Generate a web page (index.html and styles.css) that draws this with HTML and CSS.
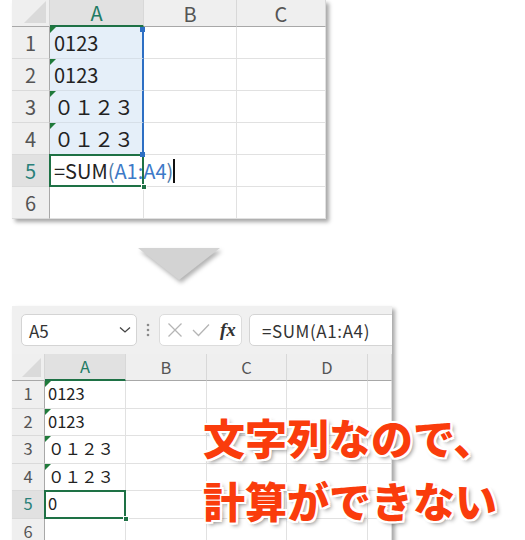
FILE: index.html
```html
<!DOCTYPE html>
<html lang="ja">
<head>
<meta charset="utf-8">
<title>文字列の合計</title>
<link rel="stylesheet" href="styles.css">
</head>
<body>
<div class="page">

  <!-- editing the formula -->
  <div class="shot shot-top">
    <div class="grid grid-top">
      <div class="corner"><span class="tri"></span></div>
      <div class="ch ch-sel">A</div>
      <div class="ch">B</div>
      <div class="ch">C</div>

      <div class="rh">1</div>
      <div class="c rng txt"><span class="h h-tr"></span>0123</div>
      <div class="c"></div><div class="c"></div>

      <div class="rh">2</div>
      <div class="c rng txt">0123</div>
      <div class="c"></div><div class="c"></div>

      <div class="rh">3</div>
      <div class="c rng txt">０１２３</div>
      <div class="c"></div><div class="c"></div>

      <div class="rh">4</div>
      <div class="c rng txt"><span class="h h-br"></span>０１２３</div>
      <div class="c"></div><div class="c"></div>

      <div class="rh rh-sel">5</div>
      <div class="c active"><span>=SUM</span><span class="paren">(</span><span class="ref">A1:A4</span><span class="paren">)</span><span class="caret"></span><span class="h-g"></span></div>
      <div class="c"></div><div class="c"></div>

      <div class="rh">6</div>
      <div class="c"></div><div class="c"></div><div class="c"></div>
    </div>
  </div>

  <svg class="arrow" width="86" height="38" viewBox="0 0 86 38">
    <polygon points="0,0 82,0 41,32" fill="#d3d3d3"/>
  </svg>

  <!-- after entering the formula -->
  <div class="shot shot-bottom">
    <div class="fbar">
      <div class="namebox">
        <span>A5</span>
        <svg class="chev" width="12" height="8" viewBox="0 0 12 8"><polyline points="1,1.5 6,6 11,1.5" fill="none" stroke="#444" stroke-width="1.3"/></svg>
      </div>
      <svg class="dots" width="4" height="14" viewBox="0 0 4 14"><circle cx="2" cy="2" r="1.3" fill="#8a8a8a"/><circle cx="2" cy="7" r="1.3" fill="#8a8a8a"/><circle cx="2" cy="12" r="1.3" fill="#8a8a8a"/></svg>
      <div class="fxbox">
        <svg width="16" height="16" viewBox="0 0 16 16"><path d="M1.5 1.5 L14.5 14.5 M14.5 1.5 L1.5 14.5" stroke="#b5b5b5" stroke-width="1.3" fill="none"/></svg>
        <svg width="18" height="14" viewBox="0 0 18 14"><polyline points="1,7 6.5,12.5 17,1.5" stroke="#b5b5b5" stroke-width="1.3" fill="none"/></svg>
        <span class="fx">fx</span>
      </div>
      <div class="formula">=SUM(A1:A4)</div>
    </div>
    <div class="grid grid-bottom">
      <div class="corner"><span class="tri"></span></div>
      <div class="ch ch-sel">A</div>
      <div class="ch">B</div>
      <div class="ch">C</div>
      <div class="ch">D</div>
      <div class="ch"></div>

      <div class="rh">1</div>
      <div class="c txt">0123</div>
      <div class="c"></div><div class="c"></div><div class="c"></div><div class="c"></div>

      <div class="rh">2</div>
      <div class="c txt">0123</div>
      <div class="c"></div><div class="c"></div><div class="c"></div><div class="c"></div>

      <div class="rh">3</div>
      <div class="c txt">０１２３</div>
      <div class="c"></div><div class="c"></div><div class="c"></div><div class="c"></div>

      <div class="rh">4</div>
      <div class="c txt">０１２３</div>
      <div class="c"></div><div class="c"></div><div class="c"></div><div class="c"></div>

      <div class="rh rh-sel">5</div>
      <div class="c active">0<span class="h-g"></span></div>
      <div class="c"></div><div class="c"></div><div class="c"></div><div class="c"></div>

      <div class="rh">6</div>
      <div class="c"></div><div class="c"></div><div class="c"></div><div class="c"></div><div class="c"></div>
    </div>
  </div>

  <div class="note">文字列なので、<br>計算ができない</div>
</div>
</body>
</html>
```

FILE: styles.css
```css
html, body {
  margin: 0;
  padding: 0;
  background: #fff;
}

.page {
  position: relative;
  width: 525px;
  height: 540px;
  overflow: hidden;
  padding-left: 12px;
  box-sizing: border-box;
  font-family: "Noto Sans CJK JP", "Noto Sans", sans-serif;
  color: #222;
}

.shot {
  position: relative;
  background: #fff;
  overflow: hidden;
  box-shadow: 3px 3px 4px rgba(0, 0, 0, 0.35);
}

.shot-top {
  width: 314px;
  height: 219px;
}

.shot-bottom {
  margin-top: 20px;
  width: 380px;
  height: 240px;
}

/* ---------- grid ---------- */
.grid {
  display: grid;
}

.grid-top {
  grid-template-columns: 38px 94px 93px 89px;
  grid-template-rows: 27px repeat(6, 32px);
  font-size: 20px;
}

.grid-bottom {
  grid-template-columns: 33px 81px 81px 80px 81px 24px;
  grid-template-rows: 27px repeat(6, 27.5px);
  font-size: 16.5px;
}

.grid > div {
  box-sizing: border-box;
  position: relative;
}

.corner {
  background: #efefef;
  border-right: 1px solid #d6d6d6;
  border-bottom: 1px solid #a8a8a8;
}

.corner .tri {
  position: absolute;
  right: 3px;
  bottom: 3px;
  width: 0;
  height: 0;
  border-left: 22px solid transparent;
  border-bottom: 22px solid #dadada;
}

.grid-bottom .corner .tri {
  border-left-width: 19px;
  border-bottom-width: 19px;
}

.ch {
  background: #efefef;
  border-right: 1px solid #d8d8d8;
  border-bottom: 1px solid #a8a8a8;
  display: flex;
  align-items: center;
  justify-content: center;
  color: #555;
  line-height: 1.2;
  padding-top: 1px;
}

.ch-sel {
  background: #e1e1e1;
  color: #227a64;
  border-bottom: 2px solid #1e7145;
}

.rh {
  background: #efefef;
  border-right: 1px solid #a8a8a8;
  border-bottom: 1px solid #dadada;
  display: flex;
  align-items: center;
  justify-content: center;
  color: #555;
  line-height: 1.2;
}

.rh-sel {
  background: #e1e1e1;
  color: #2a8079;
}

.c {
  border-right: 1px solid #e1e1e1;
  border-bottom: 1px solid #e1e1e1;
  display: flex;
  align-items: center;
  padding-left: 4px;
  white-space: nowrap;
  line-height: 1.2;
}

.grid-bottom .c {
  padding-left: 3px;
}

/* text-formatted number marker */
.txt::before {
  content: "";
  position: absolute;
  left: 0;
  top: 0;
  width: 0;
  height: 0;
  border-top: 6px solid #1f7a3a;
  border-right: 6px solid transparent;
}

/* referenced range while editing */
.rng {
  background: #e5eff9;
  border-right: 2px solid #2d6fc4;
  border-bottom-color: #d6dfe8;
}

.h {
  position: absolute;
  right: -3px;
  width: 5px;
  height: 5px;
  background: #2d6fc4;
  z-index: 2;
}

.h-tr { top: 0; }
.h-br { bottom: -3px; }

/* active cell */
.active {
  overflow: visible;
}

.active::after {
  content: "";
  position: absolute;
  left: -1px;
  top: -1px;
  right: -1px;
  bottom: -1px;
  border: 2px solid #1e7145;
  z-index: 1;
}

.h-g {
  position: absolute;
  right: -4px;
  bottom: -4px;
  width: 6px;
  height: 6px;
  background: #1e7145;
  border: 1px solid #fff;
  box-sizing: border-box;
  z-index: 3;
}

.paren { color: #4d79a8; }
.ref { color: #3d7ac8; }

.caret {
  position: relative;
  z-index: 4;
  flex: none;
  width: 1.5px;
  height: 24px;
  background: #111;
  margin-left: 0;
}

/* ---------- arrow ---------- */
.arrow {
  display: block;
  margin: 29px 0 0 126px;
  filter: drop-shadow(2px 3px 2px rgba(0, 0, 0, 0.3));
}

/* ---------- formula bar ---------- */
.fbar {
  height: 48px;
  background: #f0f0f0;
  display: flex;
  align-items: center;
  padding-left: 9px;
  box-sizing: border-box;
}

.fbar > * {
  flex: none;
}

.namebox {
  width: 116px;
  height: 32px;
  box-sizing: border-box;
  background: #fff;
  border: 1px solid #d4d4d4;
  border-radius: 5px;
  display: flex;
  align-items: center;
  justify-content: space-between;
  padding: 0 5px 0 7px;
  font-size: 17px;
  color: #333;
}

.dots {
  margin: 0 9px 0 9px;
}

.fxbox {
  width: 83px;
  height: 32px;
  box-sizing: border-box;
  background: #fff;
  border: 1px solid #dcdcdc;
  border-radius: 5px;
  display: flex;
  align-items: center;
  gap: 9px;
  padding-left: 7px;
}

.fx {
  font-family: "Liberation Serif", serif;
  font-style: italic;
  font-weight: bold;
  font-size: 19px;
  color: #333;
  margin-left: 1px;
}

.formula {
  margin-left: 7px;
  width: 160px;
  height: 32px;
  box-sizing: border-box;
  background: #fff;
  border: 1px solid #d4d4d4;
  border-radius: 5px;
  display: flex;
  align-items: center;
  padding-left: 12px;
  font-size: 17px;
  letter-spacing: 0.6px;
  color: #333;
}

/* ---------- caption ---------- */
.note {
  position: absolute;
  left: 203px;
  top: 405px;
  font-family: "Noto Sans CJK JP", sans-serif;
  font-weight: 900;
  font-size: 42px;
  line-height: 63px;
  color: #fa3c0c;
  white-space: nowrap;
  text-shadow:
    2px 0 0 #fff, -2px 0 0 #fff, 0 2px 0 #fff, 0 -2px 0 #fff,
    2px 2px 0 #fff, -2px -2px 0 #fff, 2px -2px 0 #fff, -2px 2px 0 #fff,
    3px 3px 4px rgba(0, 0, 0, 0.45);
}
```
